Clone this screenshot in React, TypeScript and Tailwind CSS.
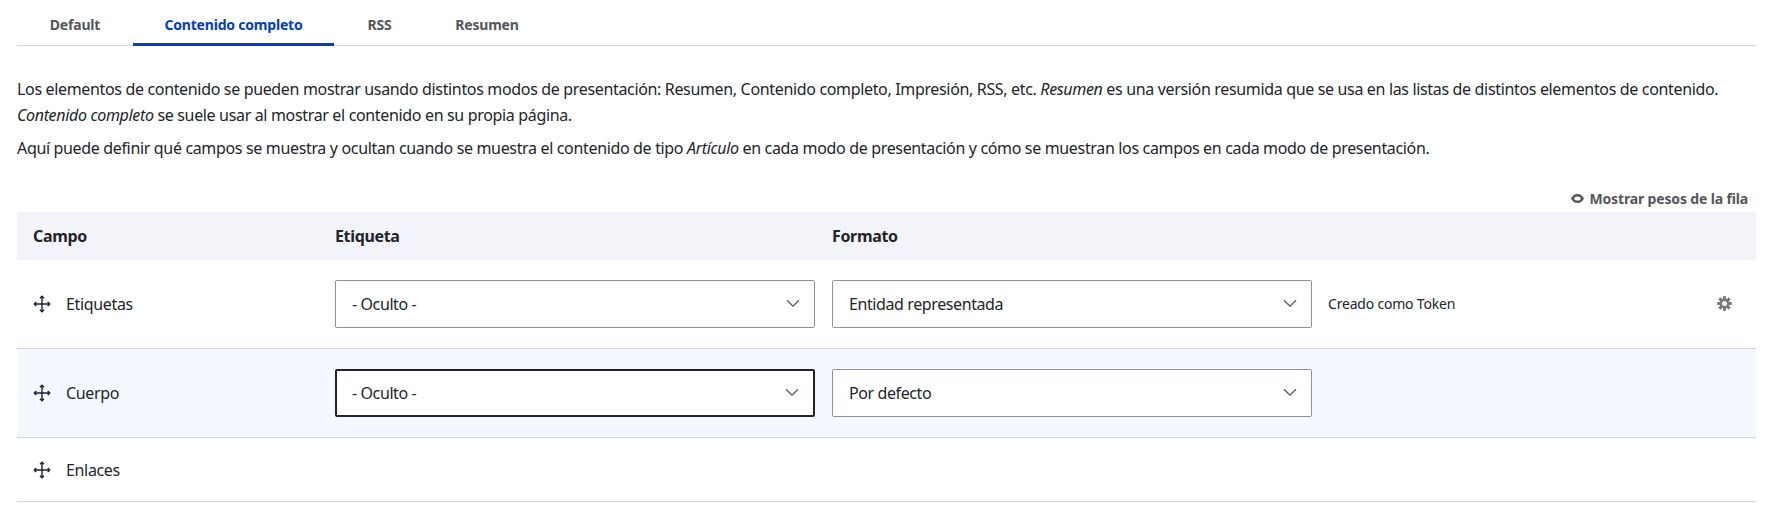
import React from "react";

function Move() {
  return (
    <svg width="18" height="18" viewBox="0 0 18 18" fill="none" stroke="#1a1f3a" strokeWidth="1.400" className="shrink-0">
      <path d="M9 1.5V16.500M1.500 9H16.500" />
      <path d="M7 3.300L9 1.300L11 3.300M7 14.700L9 16.700L11 14.700M3.300 7L1.300 9L3.300 11M14.700 7L16.700 9L14.700 11" />
    </svg>
  );
}

function Select({ value, focus }: { value: string; focus?: boolean }) {
  return (
    <div className={"h-12 w-[480px] bg-white flex items-center justify-between pr-[14px] rounded-[2px] text-[16px] tracking-[-0.4px] text-[#232429] " + (focus ? "border-2 border-[#222330] pl-[15px]" : "border border-[#8e929c] pl-4")}>
      <span>{value}</span>
      <svg width="14" height="9" viewBox="0 0 14 9" fill="none" stroke="#545560" strokeWidth="1.3"><path d="M1 1.200L7 7.200L13 1.200" /></svg>
    </div>
  );
}

const Tab = ({ label, active, className }: { label: string; active?: boolean; className: string }) => (
  <div className={"h-[46px] pt-[5px] flex items-center justify-center text-[14px] font-bold tracking-[-0.2px] border-b-[3px] " + className + " " + (active ? "text-[#003cc5] border-[#003cc5]" : "text-[#55565b] border-transparent")}>
    {label}
  </div>
);

function Gear() {
  const teeth = [0, 45, 90, 135];
  return (
    <svg width="15" height="15" viewBox="0 0 16 16" fill="#75767b">
      {teeth.map((a) => (
        <rect key={a} x="6.400" y="0.300" width="3.200" height="15.400" transform={`rotate(${a} 8 8)`} />
      ))}
      <circle cx="8" cy="8" r="5" />
      <circle cx="8" cy="8" r="2.700" fill="#ffffff" />
    </svg>
  );
}

export default function App() {
  return (
    <div className="w-[1791px] h-[515px] bg-white overflow-hidden pl-[17px] pr-[35px] text-[#232429] tracking-[-0.34px] font-['Noto_Sans',sans-serif]">
      <div className="flex h-[46px] border-b border-[#d3d4d9]">
        <Tab label="Default" className="w-[116px]" />
        <Tab label="Contenido completo" active className="w-[201px]" />
        <Tab label="RSS" className="w-[91px]" />
        <Tab label="Resumen" className="w-[124px]" />
      </div>
      <p className="mt-[31px] text-[16px] leading-[25.6px] whitespace-nowrap">
        Los elementos de contenido se pueden mostrar usando distintos modos de presentación: Resumen, Contenido completo, Impresión, RSS, etc. <em>Resumen</em> es una versión resumida que se usa en las listas de distintos elementos de contenido.
        <br />
        <em>Contenido completo</em> se suele usar al mostrar el contenido en su propia página.
      </p>
      <p className="mt-[8px] text-[16px] leading-[25.6px] whitespace-nowrap">
        Aquí puede definir qué campos se muestra y ocultan cuando se muestra el contenido de tipo <em>Artículo</em> en cada modo de presentación y cómo se muestran los campos en cada modo de presentación.
      </p>
      <div className="mt-[27px] flex justify-end items-center gap-[5px] pr-2 h-5 text-[14px] font-bold tracking-[-0.15px] text-[#55565b]">
        <svg width="13" height="9" viewBox="0 0 13 9"><path fillRule="evenodd" fill="#55565b" d="M6.500 0C3.500 0 1.200 1.800 0 4.500C1.200 7.200 3.500 9 6.500 9S11.800 7.200 13 4.500C11.800 1.800 9.500 0 6.500 0ZM6.500 2.500A3.200 2 0 1 1 6.500 6.500A3.200 2 0 1 1 6.500 2.500Z" /></svg>
        Mostrar pesos de la fila
      </div>
      <div className="mt-[3px] grid grid-cols-[302px_497px_1fr] h-[48px] items-center bg-[#f3f4f9] pl-4 font-bold text-[16px]">
        <div>Campo</div>
        <div>Etiqueta</div>
        <div>Formato</div>
      </div>
      <div className="grid grid-cols-[302px_497px_1fr] h-[89px] items-center pl-4 border-b border-[#d3d4d9]">
        <div className="flex items-center gap-[15px]"><Move /><span>Etiquetas</span></div>
        <Select value="- Oculto -" />
        <div className="flex items-center">
          <Select value="Entidad representada" />
          <span className="ml-4 text-[14px] tracking-[-0.2px]">Creado como Token</span>
          <span className="ml-auto mr-[24px] flex"><Gear /></span>
        </div>
      </div>
      <div className="grid grid-cols-[302px_497px_1fr] h-[89px] items-center pl-4 bg-[#f5f8fe] border-b border-[#d3d4d9]">
        <div className="flex items-center gap-[15px]"><Move /><span>Cuerpo</span></div>
        <Select value="- Oculto -" focus />
        <Select value="Por defecto" />
      </div>
      <div className="flex items-center gap-[15px] h-[64px] pl-4 pt-[2px] border-b border-[#d3d4d9]"><Move /><span>Enlaces</span></div>
    </div>
  );
}
